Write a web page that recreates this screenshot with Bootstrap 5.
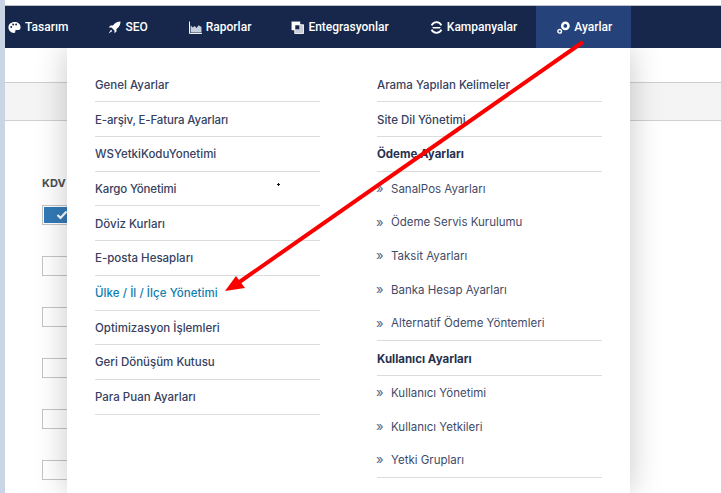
<!DOCTYPE html>
<html lang="tr">
<head>
<meta charset="utf-8">
<title>Ayarlar</title>
<link href="https://cdn.jsdelivr.net/npm/bootstrap@5.3.0/dist/css/bootstrap.min.css" rel="stylesheet">
<style>
html,body{height:493px;overflow:hidden}
body{font-family:Inter,"Noto Sans",sans-serif;font-size:12px;background:#fff;position:relative}
.side-strip{width:5px;height:493px;background:#c9d4e5;flex:none}
.page-area{height:493px;position:relative;min-width:0}
.top-gap{height:5px;background:#fff;border-bottom:1px solid #bfc3c9;box-sizing:content-box}
.main-bar{height:42px;background:#16274b;padding:0;position:relative;z-index:2}
.main-bar .nav-link{height:42px;color:#fff;font-family:Roboto,sans-serif;font-weight:500;font-size:12px;padding:0 18px 0 22px;display:flex;align-items:center;gap:4px}
.main-bar .nav-item:first-child .nav-link{padding-left:3px;padding-right:18px}
.main-bar .nav-item:nth-child(2) .nav-link{padding-right:19px}
.main-bar .nav-item:nth-child(5) .nav-link{padding:0 19px 0 23px}
.main-bar .nav-link.active{background:#25427a;color:#fff;padding:0 19px 0 21px}
.main-bar svg{width:13px;height:13px;flex:none}
.band{height:39px;margin-top:34px;background:#f4f4f4;border-top:1px solid #cfcfcf;border-bottom:1px solid #cfcfcf;box-sizing:border-box}
.form-zone{padding:55px 0 0 37px}
.kdv-label{font-weight:700;font-size:11px;color:#4f4f4f;margin-bottom:15px;line-height:14px}
.box-col{gap:31px}
.tick-box{width:40px;height:20px;border:1px solid #c4c4c4;background:#fff}
.tick-box.on{padding:1px}
.tick-fill{background:#337ab7;height:100%;color:#fff;display:flex;align-items:center;justify-content:center}
.mega-menu{left:62px;top:48px;width:563px;height:445px;background:#fff;box-shadow:0 0 30px rgba(0,0,0,.22);padding:19.700px 28px 0;gap:57px}
.menu-col{width:225px}
.menu-row{height:34.700px;padding-top:2px;display:flex;align-items:center;color:#35415f;font-size:11.500px;text-decoration:none;border-bottom:1px solid #dcdcdc;white-space:nowrap;font-weight:500}
.menu-row.tight{letter-spacing:-.15px}
.menu-row.head{font-weight:700;color:#26304f;height:35px}
.menu-row.hot{color:#0d7db0;letter-spacing:.06px}
.menu-row.sub{border-bottom:0;font-weight:400;color:#3f4a68;height:33.700px;padding-top:1px}
.menu-row.sub.last{border-bottom:1px solid #dcdcdc;height:34.500px}
.chev{width:14px;color:#5a6480;font-size:13px;line-height:12px;flex:none;margin-top:-3px;margin-left:-1px;margin-right:1px}
.tiny-dot{left:272px;top:183px;width:3px;height:3px;background:linear-gradient(#111,#111) center/3px 1px no-repeat,linear-gradient(#111,#111) center/1px 3px no-repeat}
.arrow-layer{left:0;top:0;width:721px;height:493px;pointer-events:none;z-index:3}
</style>
</head>
<body>
<div class="d-flex">
  <div class="side-strip"></div>
  <div class="page-area flex-grow-1">
    <div class="top-gap"></div>
    <nav class="main-bar">
      <ul class="navbar-nav flex-row">
        <li class="nav-item"><a class="nav-link" href="#"><svg viewBox="0 0 12 12"><path fill="#fff" fill-rule="evenodd" d="M6 1C2.800 1 .4 3.200 .4 6s2.300 5 5.100 5c1 0 1.400-.6 1.200-1.300-.2-.8.2-1.400 1.100-1.400h1.500c1.500 0 2.300-1 2.300-2.400C11.600 2.900 9.200 1 6 1ZM3 6.400a.9.9 0 1 1 0-1.800.9.9 0 0 1 0 1.800Zm1.800-2.300a.9.9 0 1 1 0-1.800.9.9 0 0 1 0 1.800Zm2.700 0a.9.9 0 1 1 0-1.800.9.9 0 0 1 0 1.800Z"/></svg>Tasarım</a></li>
        <li class="nav-item"><a class="nav-link" href="#"><svg viewBox="0 0 12 12"><path fill="#fff" d="M11.600 .4C8.500 .5 6.300 1.700 4.600 4.200H2.300L.6 6h2.600l2.800 2.800V11.400l1.800-1.700V7.400c2.500-1.700 3.700-3.900 3.800-7ZM2.800 8 .5 11.500 4 9.200Z"/></svg>SEO</a></li>
        <li class="nav-item"><a class="nav-link" href="#"><svg viewBox="0 0 12 12"><path fill="none" stroke="#fff" stroke-width=".9" d="M.5 .5V11.500H12"/><path fill="#c7cede" d="M1.500 10.500V4L3.500 6 5.200 4.500 7 6.500 8.800 4 11.500 5.500V10.500Z"/></svg>Raporlar</a></li>
        <li class="nav-item"><a class="nav-link" href="#"><svg viewBox="0 0 12 12"><rect x=".5" y=".5" width="8" height="8" fill="#fff"/><rect x="3.500" y="3.500" width="8" height="8" fill="#c9ccd4" stroke="#fff" stroke-width=".8"/><rect x="4" y="4" width="3.600" height="3.600" fill="#16274b"/></svg>Entegrasyonlar</a></li>
        <li class="nav-item"><a class="nav-link" href="#"><svg viewBox="0 0 12 12"><path fill="none" stroke="#fff" stroke-width="1.700" d="M1.500 4C2.500 1.700 4 1 6 1s3.500.7 4.500 3M1.500 8c1 2.300 2.500 3 4.500 3s3.500-.7 4.500-3"/><path fill="#fff" d="M2 5.500h8L9 7H3Z"/></svg>Kampanyalar</a></li>
        <li class="nav-item"><a class="nav-link active" href="#"><svg viewBox="0 0 12 12"><circle cx="7.700" cy="4.500" r="2.900" fill="none" stroke="#fff" stroke-width="2.300"/><circle cx="2.500" cy="9.500" r="1.700" fill="none" stroke="#fff" stroke-width="1.300"/></svg>Ayarlar</a></li>
      </ul>
    </nav>
    <div class="band"></div>
    <div class="form-zone">
      <div class="kdv-label">KDV Dahil</div>
      <div class="d-flex flex-column box-col">
        <div class="tick-box on"><div class="tick-fill"><svg width="12" height="10" viewBox="0 0 12 10"><path d="M1.500 5 4.500 8 10.500 1.500" fill="none" stroke="#fff" stroke-width="2.200"/></svg></div></div>
        <div class="tick-box"></div>
        <div class="tick-box"></div>
        <div class="tick-box"></div>
        <div class="tick-box"></div>
        <div class="tick-box"></div>
      </div>
    </div>
    <div class="mega-menu position-absolute d-flex">
      <div class="menu-col">
        <a class="menu-row" href="#">Genel Ayarlar</a>
        <a class="menu-row tight" href="#">E-arşiv, E-Fatura Ayarları</a>
        <a class="menu-row" href="#">WSYetkiKoduYonetimi</a>
        <a class="menu-row tight" href="#">Kargo Yönetimi</a>
        <a class="menu-row" href="#">Döviz Kurları</a>
        <a class="menu-row" href="#">E-posta Hesapları</a>
        <a class="menu-row hot" href="#">Ülke / İl / İlçe Yönetimi</a>
        <a class="menu-row" href="#">Optimizasyon İşlemleri</a>
        <a class="menu-row" href="#">Geri Dönüşüm Kutusu</a>
        <a class="menu-row" href="#">Para Puan Ayarları</a>
      </div>
      <div class="menu-col">
        <a class="menu-row" href="#">Arama Yapılan Kelimeler</a>
        <a class="menu-row" href="#">Site Dil Yönetimi</a>
        <a class="menu-row head" href="#">Ödeme Ayarları</a>
        <a class="menu-row sub" href="#"><span class="chev">»</span>SanalPos Ayarları</a>
        <a class="menu-row sub" href="#"><span class="chev">»</span>Ödeme Servis Kurulumu</a>
        <a class="menu-row sub" href="#"><span class="chev">»</span>Taksit Ayarları</a>
        <a class="menu-row sub" href="#"><span class="chev">»</span>Banka Hesap Ayarları</a>
        <a class="menu-row sub last" href="#"><span class="chev">»</span>Alternatif Ödeme Yöntemleri</a>
        <a class="menu-row head" href="#">Kullanıcı Ayarları</a>
        <a class="menu-row sub" href="#"><span class="chev">»</span>Kullanıcı Yönetimi</a>
        <a class="menu-row sub" href="#"><span class="chev">»</span>Kullanıcı Yetkileri</a>
        <a class="menu-row sub last" href="#"><span class="chev">»</span>Yetki Grupları</a>
      </div>
    </div>
    <div class="tiny-dot position-absolute"></div>
  </div>
</div>
<svg class="arrow-layer position-absolute" viewBox="0 0 721 493"><path d="M583 42 238 283" stroke="#fb0000" stroke-width="4" fill="none"/><path d="M225 291 236 276 245 288Z" fill="#fb0000"/></svg>
</body>
</html>
